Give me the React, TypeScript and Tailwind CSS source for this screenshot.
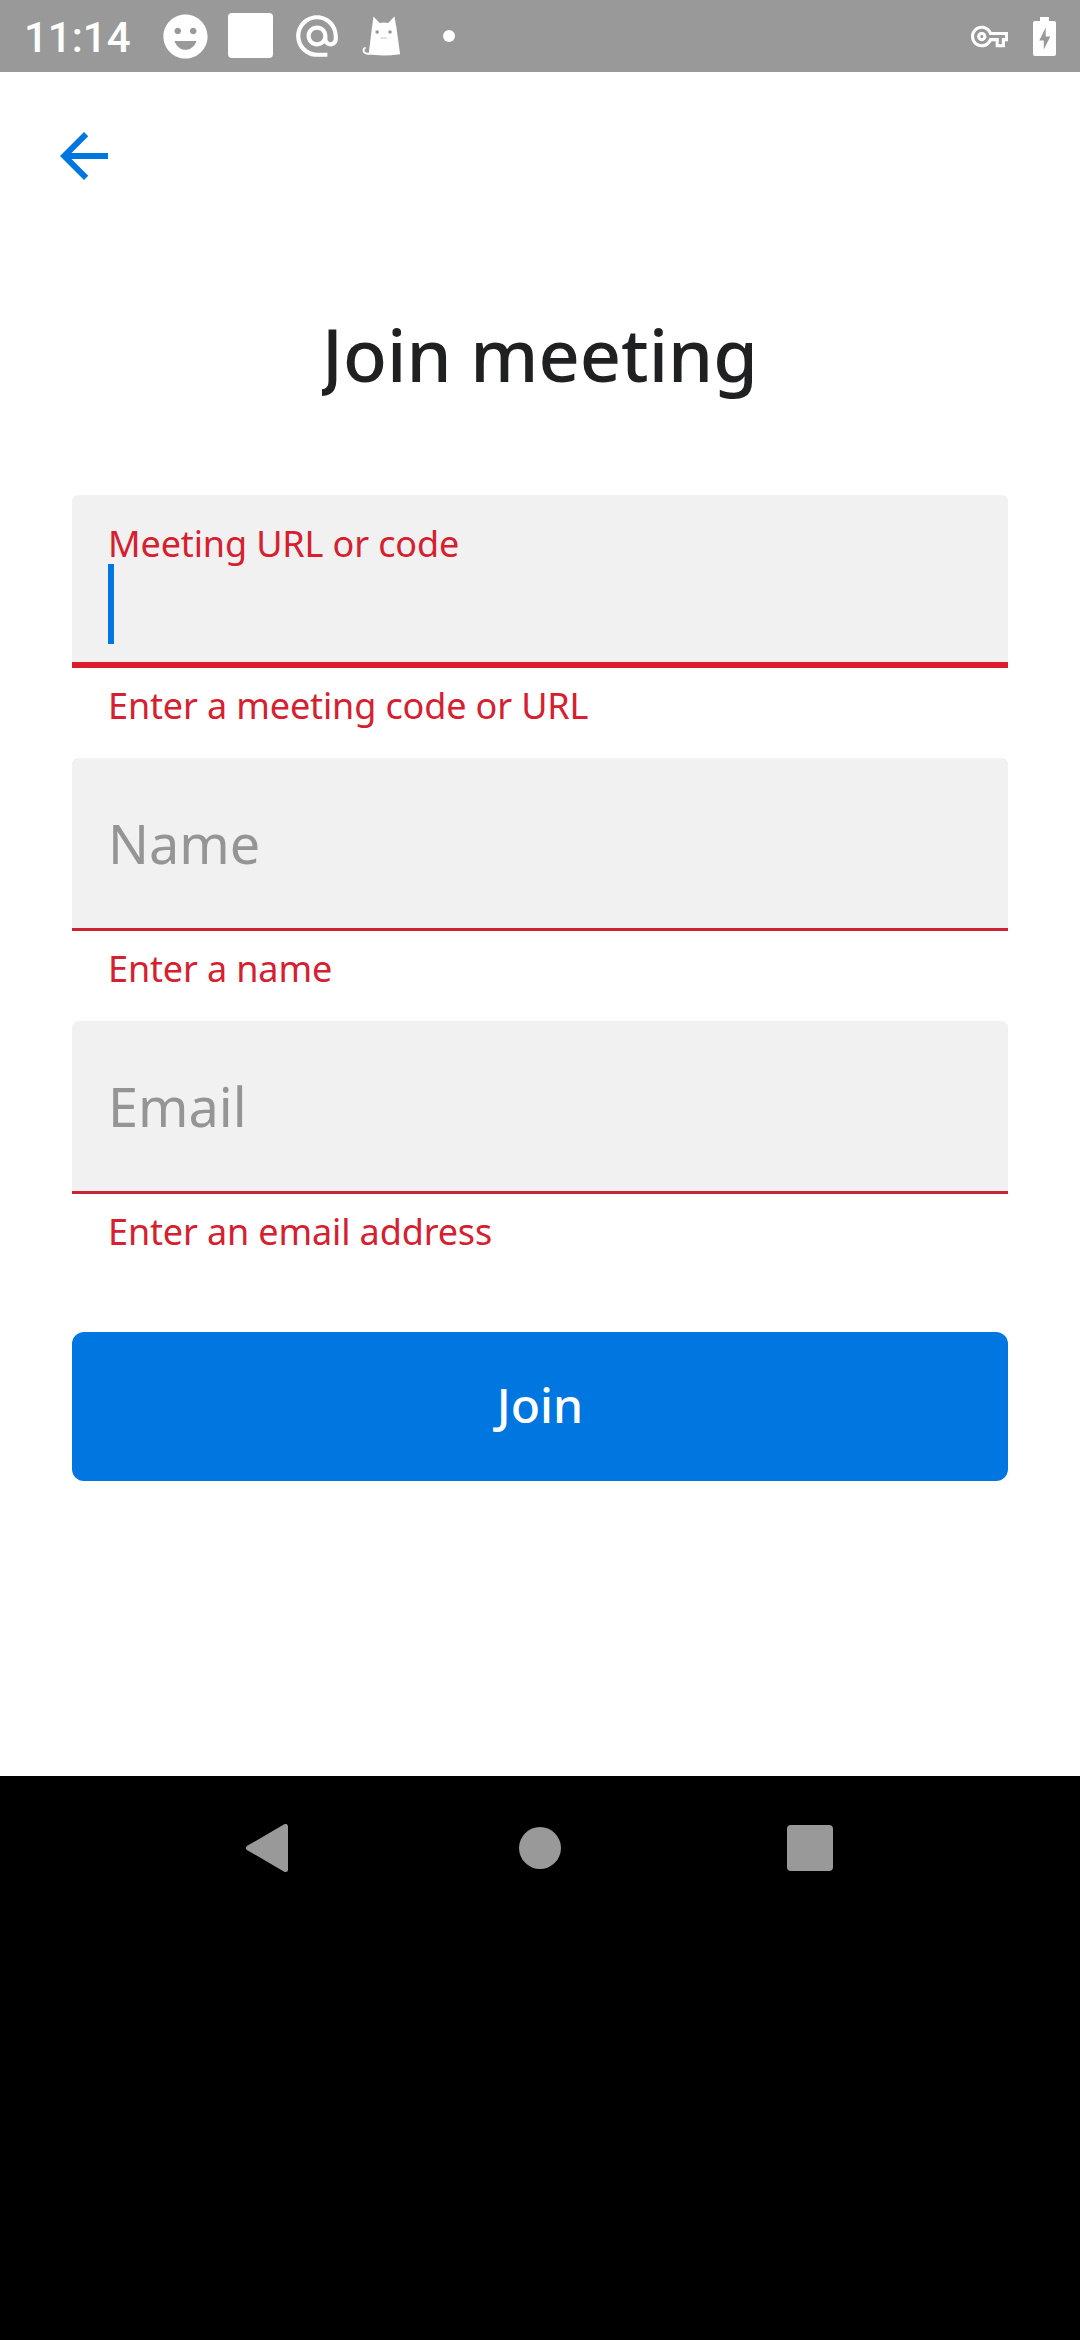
import type { ReactNode } from "react";
import { MdAlternateEmail, MdArrowBack, MdEmojiEmotions, MdOutlineVpnKey } from "react-icons/md";

function CatIcon() {
  return (
    <svg viewBox="360 12 44 46" className="ml-[18px] h-[46px] w-[44px] shrink-0">
      <path
        d="M373.5 15.5 379.6 22q4.300-1 8.600 0l6.200-6.500 2.100 11.500 3.600 26.200q-16 2.200-31.500.4l3.300-26.600Z"
        fill="#fff"
      />
      <path d="M370 52.800c-4.500.3-7-1.600-6.500-4.200.2-1.200 1-1.800 2.200-1.700" fill="none" stroke="#fff" strokeWidth="2" />
      <circle cx="377.200" cy="31" r="1.800" fill="#999" />
      <circle cx="390" cy="31" r="1.800" fill="#999" />
      <path d="M380.500 37.300q3.200-1 6.500 0" fill="none" stroke="#ccc" strokeWidth="1.200" />
    </svg>
  );
}

function BatteryIcon() {
  return (
    <svg viewBox="0 0 23 39" className="ml-[25px] h-[39px] w-[23px] shrink-0">
      <path d="M7 0h9v4h5q2 0 2 2v31q0 2-2 2H2q-2 0-2-2V6q0-2 2-2h5Z" fill="#fff" />
      <path d="M12.700 10.500 6.300 23.500h4.500v9L17.300 19.500h-4.600Z" fill="#999" />
    </svg>
  );
}

function StatusBar() {
  return (
    <header className="flex h-[72px] items-center bg-[#999999] text-white">
      <span className="ml-6 mt-[3px] w-[108px] shrink-0 whitespace-nowrap font-['Roboto'] text-[42px] font-medium leading-[48px]">
        11:14
      </span>
      <MdEmojiEmotions className="ml-[27px] size-[53px] shrink-0" />
      <span className="-mt-px ml-4 size-[45px] shrink-0 rounded-[4px] bg-white" />
      <MdAlternateEmail className="ml-[19px] size-[50px] shrink-0" />
      <CatIcon />
      <span className="ml-[39px] size-3 shrink-0 rounded-full bg-white" />
      <MdOutlineVpnKey className="ml-auto mt-px size-[37px] shrink-0" />
      <BatteryIcon />
      <span className="w-6 shrink-0" />
    </header>
  );
}

function Field({ error, focused, children }: { error: string; focused?: boolean; children: ReactNode }) {
  return (
    <div className="flex flex-col">
      <div
        className={
          focused
            ? "h-[173px] rounded-t-[6px] border-b-[6px] border-[#dc1c2c] bg-[#f1f1f1] px-9 pt-[25px]"
            : "h-[173px] rounded-t-[6px] border-b-[3px] border-[#cd2233] bg-[#f1f1f1] px-9 pt-12"
        }
      >
        {children}
      </div>
      <p className="mt-[14px] px-9 text-[36px] leading-[48px] tracking-[-0.14px] text-[#d6202f]">{error}</p>
    </div>
  );
}

function NavBar() {
  return (
    <nav className="flex h-[564px] items-start bg-black pt-12">
      <svg viewBox="0 0 42 48" className="ml-[246px] h-12 w-[42px]">
        <path d="M39.500 2.500v43L2.500 24Z" fill="#999" stroke="#999" strokeWidth="5" strokeLinejoin="round" />
      </svg>
      <span className="ml-[231px] mt-[3px] size-[42px] rounded-full bg-[#999999]" />
      <span className="ml-[226px] mt-px size-[46px] rounded-[4px] bg-[#999999]" />
    </nav>
  );
}

export default function App() {
  return (
    <div className="flex h-[2340px] w-[1080px] flex-col overflow-hidden bg-white font-['Noto_Sans',sans-serif]">
      <StatusBar />
      <main className="flex h-[1704px] flex-col px-[72px]">
        <button aria-label="Back" className="-ml-6 mt-12 size-[72px] text-[#0076e1]">
          <MdArrowBack className="size-[72px]" />
        </button>
        <h1 className="mt-[114px] self-center overflow-hidden text-[72px] font-medium leading-[96px] text-[#1f2022]">
          Join meeting
        </h1>
        <form className="mt-[93px] flex flex-col">
          <div className="flex flex-col gap-7">
            <Field error="Enter a meeting code or URL" focused>
              <label className="block text-[36px] leading-[48px] tracking-[-0.14px] text-[#d6202f]">
                Meeting URL or code
              </label>
              <div className="-mt-1 h-20 w-1.5 bg-[#0076e1]" />
            </Field>
            <Field error="Enter a name">
              <label className="block text-[54px] leading-[74px] text-[#959595]">Name</label>
            </Field>
            <Field error="Enter an email address">
              <label className="block text-[54px] leading-[74px] text-[#959595]">Email</label>
            </Field>
          </div>
          <button
            type="button"
            className="mt-[76px] flex h-[149px] items-start justify-center rounded-xl bg-[#0076e1] pt-[41px] text-[48px] font-medium leading-[64px] text-white"
          >
            Join
          </button>
        </form>
      </main>
      <NavBar />
    </div>
  );
}
